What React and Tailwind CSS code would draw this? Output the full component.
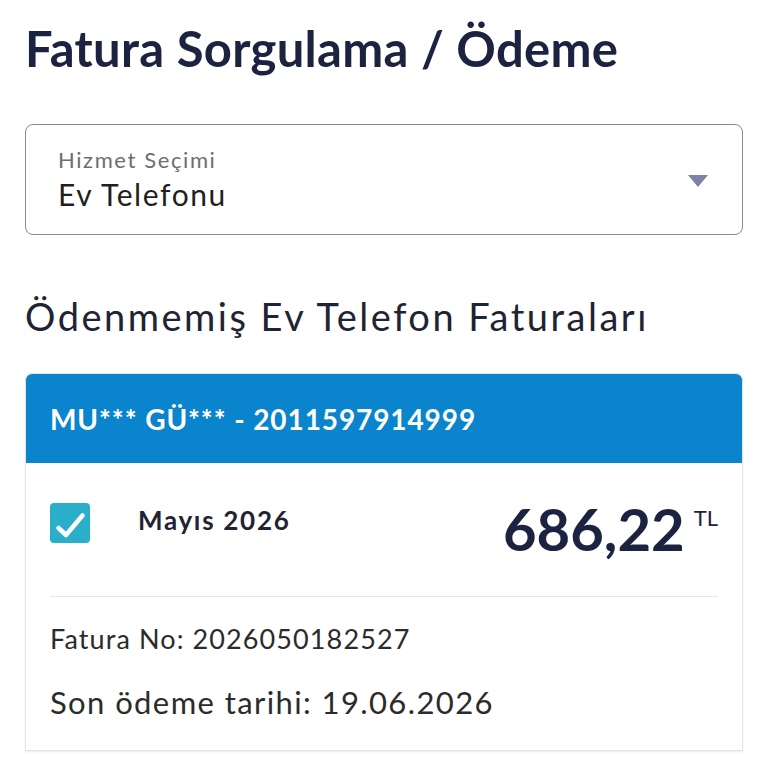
import React from "react";

export default function App() {
  return (
    <div className="w-[768px] h-[768px] bg-white overflow-hidden" style={{ fontFamily: "Lato, 'Noto Sans', sans-serif" }}>
      <div className="px-[25px]">
        <h1 className="pt-[20px] text-[49px] leading-[56px] font-bold text-[#1c2340] tracking-[0.3px]">
          Fatura Sorgulama / Ödeme
        </h1>
        <div className="mt-[48px] h-[111px] rounded-[8px] border border-[#8c8c8c] flex items-center pl-[32px] pr-[34px]">
          <div className="flex-1">
            <div className="text-[22px] leading-[26px] text-[#6e6e6e] tracking-[1.6px]">Hizmet Seçimi</div>
            <div className="text-[30px] leading-[36px] text-[#1f1f1f] mt-[3px] tracking-[1.6px]">Ev Telefonu</div>
          </div>
          <svg width="20" height="12" viewBox="0 0 20 12" className="mt-[2px]">
            <polygon points="0,0 20,0 10,12" fill="#7b83a6" />
          </svg>
        </div>
        <h2 className="mt-[58px] text-[38px] leading-[46px] font-normal text-[#1f2333] tracking-[2.5px]">
          Ödenmemiş Ev Telefon Faturaları
        </h2>
        <div className="mt-[34px] border border-[#e4e4e4] rounded-t-[6px] shadow-[0_1px_2px_rgba(0,0,0,0.08)]">
          <div className="h-[89px] bg-[#0a84cc] rounded-t-[6px] flex items-center pl-[24px]">
            <span className="text-white text-[28px] font-bold tracking-[0.9px]">MU*** GÜ*** - 2011597914999</span>
          </div>
          <div className="px-[24px]">
            <div className="h-[134px] flex items-center border-b border-[#e6e6e6]">
              <div className="-mt-[14px] w-[40px] h-[40px] rounded-[4px] bg-[#29afca]">
                <svg width="40" height="40" viewBox="0 0 40 40">
                  <polyline points="8.5,25 16,32 32.5,12.5" fill="none" stroke="white" strokeWidth="4.5" strokeLinecap="round" strokeLinejoin="round" />
                </svg>
              </div>
              <div className="ml-[48px] text-[26px] font-bold text-[#1f2333] -mt-[18px] tracking-[1.7px]">Mayıs 2026</div>
              <div className="ml-auto flex items-start -mt-[2px]">
                <span className="text-[58px] leading-[60px] font-bold text-[#1c2340]">686,22</span>
                <span className="ml-[9px] mt-[7px] text-[22px] leading-[24px] text-[#1c2340] font-normal">TL</span>
              </div>
            </div>
            <div className="pt-[25px] text-[27px] leading-[34px] text-[#2b2b2b] tracking-[1.1px]">Fatura No: 2026050182527</div>
            <div className="pt-[27px] pb-[29px] text-[31px] leading-[38px] text-[#2b2b2b] tracking-[1.4px]">Son ödeme tarihi: 19.06.2026</div>
          </div>
        </div>
      </div>
    </div>
  );
}
